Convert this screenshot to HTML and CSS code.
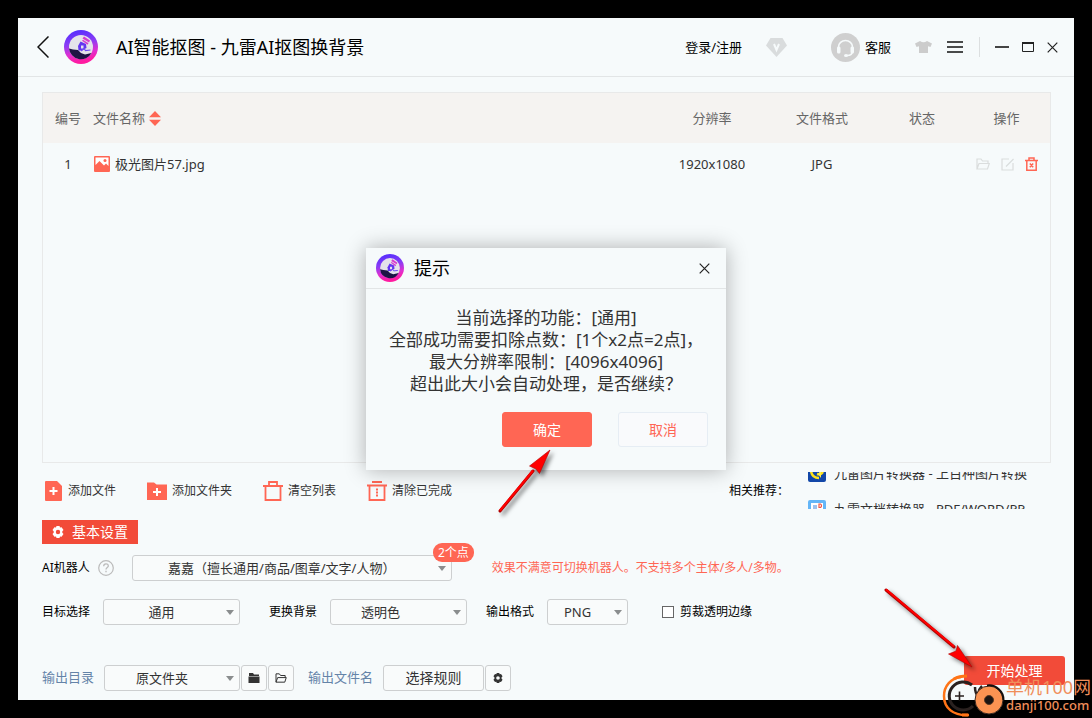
FILE: index.html
```html
<!DOCTYPE html>
<html lang="zh-CN">
<head>
<meta charset="utf-8">
<title>AI智能抠图 - 九雷AI抠图换背景</title>
<link rel="stylesheet" href="styles.css">
</head>
<body>
<svg class="defs" width="0" height="0" aria-hidden="true">
  <defs>
    <linearGradient id="ring" x1="0" y1="0" x2="0.2" y2="1">
      <stop offset="0" stop-color="#4b2bff"/>
      <stop offset="0.45" stop-color="#8a3cf5"/>
      <stop offset="0.75" stop-color="#e02fd0"/>
      <stop offset="1" stop-color="#ff1ba0"/>
    </linearGradient>
    <symbol id="logo" viewBox="0 0 34 34">
      <circle cx="17" cy="17" r="17" fill="url(#ring)"/>
      <circle cx="17" cy="17" r="12" fill="#e4e3ea"/>
      <path d="M5 18.500 9 19.500 14 20 17 23 21 24.500 27.500 23A12 12 0 0 1 5 18.500Z" fill="#1d1445"/>
      <path d="M18.500 8.500 20 6.500 26 10.500 25 12.500ZM18 10.700 19 9.700 24.500 13.300 23.500 14.800Z" fill="#d63bd0"/>
      <path d="M16.500 11.500 22 14 22.500 18 18 20.500 14.500 20.500 14 16Z" fill="#6436f0"/>
      <path d="M17 15.500h2.500v3h-2.500z" fill="#e4e3ea"/>
      <path d="M17 21 20 18.500 21.500 20.500 26.500 20" fill="none" stroke="#6f4bf5" stroke-width="1.200"/>
    </symbol>
    <symbol id="gear" viewBox="0 0 12 12">
      <path fill-rule="evenodd" d="M4.500 0h3l.5 1.600 1.600-.4L11.500 4l-1.200 1.200v1.600L11.500 8l-1.900 2.800L8 10.400 7.500 12h-3L4 10.400l-1.600.4L.5 8l1.200-1.200V5.200L.5 4l1.900-2.800L4 1.600ZM6 3.800a2.200 2.200 0 1 0 0 4.400 2.200 2.200 0 0 0 0-4.400Z"/>
    </symbol>
    <symbol id="close" viewBox="0 0 11 11">
      <path d="M.7.7 10.300 10.300M10.300.7.7 10.300" fill="none" stroke="currentColor" stroke-width="1.200"/>
    </symbol>
    <symbol id="folder-open" viewBox="0 0 14 12">
      <path d="M1 11V1h4l1.500 2H12v2.500M1 11 3 5.500h10.300L11.500 11Z" fill="none" stroke="currentColor" stroke-width="1.200"/>
    </symbol>
  </defs>
</svg>

<div class="app">
  <header class="titlebar">
    <button class="icon-btn back" aria-label="返回"><svg width="12" height="22" viewBox="0 0 12 22"><path d="M11.500.5 1 11 11.500 21.500" fill="none" stroke="#111" stroke-width="1.500"/></svg></button>
    <svg class="brand-logo" width="34" height="34"><use href="#logo"/></svg>
    <h1 class="title">AI智能抠图 - 九雷AI抠图换背景</h1>
    <div class="account">
      <a class="login" href="#login">登录/注册</a>
      <svg width="21" height="19" viewBox="0 0 21 19"><path d="M4.500 0h12L21 7.500 10.500 19 0 7.500Z" fill="#d9dcdd"/><path d="m8 6 2.500 6L13 6" fill="none" stroke="#f6fafb" stroke-width="2"/></svg>
    </div>
    <a class="service" href="#service">
      <svg width="29" height="29" viewBox="0 0 29 29"><circle cx="14.500" cy="14.500" r="14.500" fill="#cfcfcf"/><path d="M7.500 15.500V14a7 6.500 0 0 1 14 0v1.500M21.500 18c0 3-2 4.500-5.500 4.500" fill="none" stroke="#f6fafb" stroke-width="1.600"/><rect x="6" y="13.500" width="3.500" height="7" rx="1.500" fill="#f6fafb"/><rect x="19.500" y="13.500" width="3.500" height="7" rx="1.500" fill="#f6fafb"/><ellipse cx="15" cy="22.500" rx="2" ry="1.500" fill="#f6fafb"/></svg>
      <span>客服</span>
    </a>
    <div class="tools">
      <button class="icon-btn" aria-label="换肤"><svg width="17" height="12" viewBox="0 0 17 12"><path d="M5 0q3.500 2.500 7 0l5 2.500L15.500 6 13 5.200V12H4V5.200L1.500 6 0 2.500Z" fill="#ccc"/></svg></button>
      <button class="icon-btn" aria-label="菜单"><svg width="16" height="12" viewBox="0 0 16 12"><path d="M0 1h16M0 6h16M0 11h16" stroke="#111" stroke-width="1.600"/></svg></button>
    </div>
    <div class="window-controls">
      <button class="icon-btn" aria-label="最小化"><svg width="14" height="10" viewBox="0 0 14 10"><path d="M0 5h14" stroke="#444" stroke-width="2"/></svg></button>
      <button class="icon-btn" aria-label="最大化"><svg width="12" height="10" viewBox="0 0 12 10"><path d="M.5 1h11v8.500H.5Z" fill="none" stroke="#222"/><path d="M0 1h12" stroke="#222" stroke-width="2"/></svg></button>
      <button class="icon-btn" aria-label="关闭"><svg width="11" height="11"><use href="#close"/></svg></button>
    </div>
  </header>

  <main class="content">
    <section class="file-panel">
      <table class="files">
        <colgroup><col class="c-no"><col><col class="c-res"><col class="c-fmt"><col class="c-state"><col class="c-ops"></colgroup>
        <thead>
          <tr>
            <th>编号</th>
            <th class="name"><span class="name-cell sort">文件名称 <svg width="12" height="15" viewBox="0 0 12 15"><path d="M6 0 12 6.200H0ZM0 8.800h12L6 15Z" fill="#ff6654"/></svg></span></th>
            <th>分辨率</th><th>文件格式</th><th>状态</th><th class="ops">操作</th>
          </tr>
        </thead>
        <tbody>
          <tr>
            <td>1</td>
            <td class="name"><span class="name-cell"><svg width="16" height="16" viewBox="0 0 16 16"><rect width="16" height="16" rx="1" fill="#ff6654"/><path d="M1.500 1.500h13v8.500L12 7.500 10 9.500 5.500 5 1.500 9Z" fill="#fff"/><circle cx="11" cy="4.500" r="1.500" fill="#ff6654"/></svg>极光图片57.jpg</span></td>
            <td>1920x1080</td><td>JPG</td><td></td>
            <td class="ops">
              <div class="row-ops">
                <button class="icon-btn faint" aria-label="打开文件夹"><svg width="14" height="12"><use href="#folder-open"/></svg></button>
                <button class="icon-btn faint" aria-label="编辑"><svg width="13" height="13" viewBox="0 0 13 13"><path d="M8 1H1v11h11V5M5 8.500 12.500 1" fill="none" stroke="currentColor" stroke-width="1.200"/></svg></button>
                <button class="icon-btn accent" aria-label="删除"><svg width="13" height="14" viewBox="0 0 13 14"><path d="M0 3.500h13M4 3V1h5v2M1.800 4v9.200h9.400V4M4.800 6.500l3.400 3.800M8.200 6.500l-3.400 3.800" fill="none" stroke="currentColor" stroke-width="1.500"/></svg></button>
              </div>
            </td>
          </tr>
        </tbody>
      </table>
    </section>

    <section class="toolbar">
      <button class="tool-btn"><svg width="20" height="20" viewBox="0 0 20 20"><path d="M2 1q0-1 1-1h11l5 5v14q0 1-1 1H3q-1 0-1-1Z" fill="#ff6654"/><path d="M6.500 10h8M10.500 6v8" stroke="#fff" stroke-width="2"/></svg>添加文件</button>
      <button class="tool-btn"><svg width="20" height="20" viewBox="0 0 20 20"><path d="M0 1.500h7l2.500 2H20V19H0Z" fill="#ff6654"/><path d="M6 11h8M10 7v8" stroke="#fff" stroke-width="2"/></svg>添加文件夹</button>
      <button class="tool-btn"><svg width="20" height="20" viewBox="0 0 20 20"><path d="M0 5h20M6 5V1h8v4M2.500 5v14h15V5" fill="none" stroke="#ff6654" stroke-width="1.800"/></svg>清空列表</button>
      <button class="tool-btn"><svg width="20" height="20" viewBox="0 0 20 20"><path d="M5 1h10M0 4.500h20M2.500 4.500V19h15V4.500" fill="none" stroke="#ff6654" stroke-width="1.800"/><path d="M10 7.500v8" stroke="#ff6654" stroke-width="2" stroke-dasharray="2 1"/></svg>清除已完成</button>
      <div class="related">
        <span>相关推荐：</span>
        <div class="ticker">
          <a class="ticker-item" href="#image"><svg width="18" height="18" viewBox="0 0 18 18"><rect width="18" height="18" rx="2" fill="#1247a8"/><path d="M3 7q1 7 8 7M15 8q-2 3-6 2" fill="none" stroke="#ffe21a" stroke-width="2.500"/><path d="m10 10 3-4v8Z" fill="#fff04a"/></svg>九雷图片转换器 - 上百种图片转换</a>
          <a class="ticker-item" href="#doc"><svg width="18" height="18" viewBox="0 0 18 18"><rect width="18" height="18" rx="2" fill="#63b5f7"/><rect x="3" y="3" width="7" height="12" fill="#fff"/><path d="M5 6h4M5 8h4" stroke="#3d83dc"/><rect x="9" y="3" width="6" height="6" fill="#fff"/><path d="M11 4h1.500q2 1.500 0 3.500H11Z" fill="none" stroke="#ef5542" stroke-width="1.200"/></svg>九雷文档转换器 - PDF/WORD/PP</a>
        </div>
      </div>
    </section>

    <h2 class="tab"><svg width="12" height="12" fill="#fff"><use href="#gear"/></svg>基本设置</h2>

    <form class="settings">
      <div class="row robot-row">
        <label for="robot">AI机器人</label>
        <button type="button" class="icon-btn help" aria-label="帮助"><svg width="16" height="16" viewBox="0 0 16 16"><circle cx="8" cy="8" r="7.300" fill="none" stroke="#bbb" stroke-width="1.200"/><path d="M5.700 6.200c0-3.200 4.600-3 4.600-.3C10.300 7.500 8 7.500 8 9.500M8 10.800v1.500" fill="none" stroke="#bbb" stroke-width="1.300"/></svg></button>
        <div class="select w-robot"><select id="robot"><option>嘉嘉（擅长通用/商品/图章/文字/人物）</option></select><span class="badge">2个点</span></div>
        <p class="hint">效果不满意可切换机器人。不支持多个主体/多人/多物。</p>
      </div>
      <div class="row option-row">
        <div class="field"><label for="target">目标选择</label><div class="select w-mid"><select id="target"><option>通用</option></select></div></div>
        <div class="field bg-field"><label for="bg">更换背景</label><div class="select w-mid wide-arrow"><select id="bg"><option>透明色</option></select></div></div>
        <div class="field fmt-field"><label for="fmt">输出格式</label><div class="select w-small"><select id="fmt"><option>PNG</option></select></div></div>
        <label class="check"><input type="checkbox">剪裁透明边缘</label>
      </div>
      <div class="row output-row">
        <label class="blue" for="dir">输出目录</label>
        <div class="select dir"><select id="dir"><option>原文件夹</option></select></div>
        <button type="button" class="square" aria-label="选择目录"><svg width="12" height="10" viewBox="0 0 12 10"><path d="M1 0h4l1 1.500h5V3H1ZM.5 3.500h11V10H.5Z" fill="#333"/></svg></button>
        <button type="button" class="square" aria-label="打开目录"><svg width="12" height="10"><use href="#folder-open"/></svg></button>
        <span class="blue out-name">输出文件名</span>
        <button type="button" class="rule">选择规则</button>
        <button type="button" class="square" aria-label="规则设置"><svg width="10" height="10" fill="#333"><use href="#gear"/></svg></button>
        <button type="button" class="start">开始处理</button>
      </div>
    </form>
  </main>
</div>

<div class="modal-layer">
  <div class="dialog" role="dialog" aria-labelledby="dialog-title">
    <div class="dialog-head">
      <svg width="28" height="28"><use href="#logo"/></svg>
      <h2 id="dialog-title">提示</h2>
      <button class="icon-btn" aria-label="关闭"><svg width="11" height="11"><use href="#close"/></svg></button>
    </div>
    <p class="dialog-text">当前选择的功能：[通用]<br>全部成功需要扣除点数：[1个x2点=2点]，<br>最大分辨率限制：[4096x4096]<br>超出此大小会自动处理，是否继续？</p>
    <div class="dialog-actions">
      <button class="ok">确定</button>
      <button class="cancel">取消</button>
    </div>
  </div>
</div>

<svg class="arrow arrow-ok" width="60" height="70" viewBox="0 0 60 70" aria-hidden="true"><path d="M5 64 38 24" stroke="#b00000" stroke-width="3" stroke-linecap="round"/><path d="M5 63.500 38 23.500" stroke="red" stroke-width="2"/><path d="M55 3 44.500 26.500 41 22 34.500 19Z" fill="red" stroke="#b00000" stroke-width=".6"/></svg>
<svg class="arrow arrow-start" width="100" height="90" viewBox="0 0 100 90" aria-hidden="true"><path d="M6 10 74 67" stroke="#b00000" stroke-width="3" stroke-linecap="round"/><path d="M6 9.500 74 66.500" stroke="red" stroke-width="2"/><path d="M92 87 77.500 65.500 76 71 68.500 74Z" fill="red" stroke="#b00000" stroke-width=".6"/></svg>

<div class="watermark">
  <svg width="64" height="46" viewBox="0 0 64 46" aria-hidden="true">
    <path d="M19 5C9 6 2 14 2 24c0 12 9 20 25 19" fill="none" stroke="#ff7417" stroke-width="2.500"/>
    <path d="M12 7q5-3 13-3M20 43h6" fill="none" stroke="#ff7417" stroke-width="3"/>
    <path d="M30 13A14 14 0 1 0 31 34" fill="none" stroke="#2a211f" stroke-width="3"/>
    <path d="M13 24h9M17.500 19.500v9" stroke="#2a211f" stroke-width="1.600"/>
    <path d="M33 15q0 6 3 9M40 14q-3 3-4 8" fill="none" stroke="#2a211f" stroke-width="2.500"/>
    <circle cx="47" cy="28" r="14" fill="#fb9352" stroke="#3a2a22"/>
    <path d="M45 13.500A14.500 14.500 0 0 1 61.500 28" fill="none" stroke="#16100e" stroke-width="2"/>
    <circle cx="47" cy="28" r="4.500" fill="#1b1513" stroke="#5a3822"/>
  </svg>
  <div class="watermark-text"><span class="wm-name">单机100网</span><span class="wm-url">danji100.com</span></div>
</div>
</body>
</html>
```

FILE: styles.css
```css
* { box-sizing: border-box; }

body {
  margin: 0;
  min-height: 100vh;
  padding: 18px;
  background: #000;
  color: #333;
  font: 13px/20px "Noto Sans", "Noto Sans CJK SC", sans-serif;
  display: flex;
  position: relative;
  overflow: hidden;
}

h1, h2, p { margin: 0; font-weight: 400; }
a { color: inherit; text-decoration: none; }
svg { display: block; flex: none; }
button, select, input { font: inherit; color: inherit; margin: 0; }
button { padding: 0; cursor: pointer; white-space: nowrap; }
label { white-space: nowrap; }
.defs { position: absolute; }
.icon-btn { border: 0; background: none; display: flex; color: #222; }

.app {
  flex: 1;
  min-width: 0;
  background: #f6fafb;
  display: flex;
  flex-direction: column;
}

/* Title bar */
.titlebar {
  display: flex;
  align-items: center;
  height: 59px;
  padding: 0 16px 0 19px;
  border-bottom: 1px solid #e2e5e6;
  color: #000;
}
.brand-logo { margin-left: 15px; }
.title { margin-left: 18px; font-size: 18px; line-height: 26px; white-space: nowrap; }
.account { display: flex; align-items: center; gap: 24px; margin-left: auto; }
.service { display: flex; align-items: center; gap: 5px; margin-left: 44px; }
.tools { display: flex; align-items: center; gap: 15px; margin-left: 24px; }
.window-controls {
  display: flex;
  align-items: center;
  gap: 13px;
  height: 20px;
  margin-left: 16px;
  padding-left: 15px;
  border-left: 1px solid #dcdfe0;
}

.content {
  flex: 1;
  display: flex;
  flex-direction: column;
  padding: 15px 0 9px 24px;
}

/* File list */
.file-panel { flex: 1; margin-right: 23px; border: 1px solid #e8e9e9; }
.files { width: 100%; border-collapse: collapse; table-layout: fixed; text-align: center; }
.files th { height: 50px; padding: 0; background: #f5f3f1; color: #666; font-weight: 400; }
.files td { height: 42px; padding: 0; }
.files .name { text-align: left; }
.files .ops { padding-right: 4px; }
.c-no { width: 50px; }
.c-res, .c-fmt { width: 110px; }
.c-state { width: 90px; }
.c-ops { width: 83px; }
.name-cell { display: flex; align-items: center; gap: 5px; padding-left: 1px; }
.sort { padding-left: 0; gap: 4px; }
.row-ops { display: flex; align-items: center; justify-content: center; gap: 11px; }
.faint { color: #dadddd; }
.accent { color: #ff6654; }

/* Toolbar */
.toolbar {
  display: flex;
  align-items: center;
  gap: 31px;
  height: 37px;
  margin-top: 9px;
  padding: 0 42px 0 1px;
  font-size: 12px;
}
.tool-btn { display: flex; align-items: center; gap: 5px; border: 0; background: none; }
.related { display: flex; align-items: center; gap: 19px; height: 37px; margin-left: auto; color: #000; }
.ticker {
  width: 224px;
  height: 37px;
  overflow: hidden;
  display: flex;
  flex-direction: column;
  justify-content: center;
  font-size: 13px;
  color: #333;
}
.ticker-item { display: flex; align-items: center; gap: 8px; height: 36px; flex: none; white-space: nowrap; }

/* Settings */
.tab {
  display: flex;
  align-items: center;
  align-self: flex-start;
  gap: 8px;
  height: 24px;
  margin-top: 11px;
  padding: 0 10px;
  background: #f24b39;
  color: #fff;
  font-size: 14px;
}
.settings { margin-top: 11px; font-size: 12px; line-height: 22px; color: #000; }
.row { display: flex; align-items: center; }
.option-row { margin-top: 18px; }
.output-row { margin-top: 31px; padding-right: 9px; height: 35px; align-items: flex-end; }
.help { margin: 0 18px 0 8px; }
.select { position: relative; color: #333; font-size: 13px; }
.select::after {
  content: "";
  position: absolute;
  right: 6px;
  top: 11px;
  border: 4px solid transparent;
  border-top: 5px solid #8a8d8e;
  border-bottom: 0;
  pointer-events: none;
}
.select select {
  appearance: none;
  display: block;
  width: 100%;
  height: 26px;
  padding: 0 20px 0 0;
  border: 1px solid #cdcfd0;
  border-radius: 3px;
  background: #f9fbfb;
  text-align: center;
  text-align-last: center;
}
.w-robot { width: 320px; }
.w-mid { width: 137px; }
.w-small { width: 81px; }
.wide-arrow select { padding-right: 36px; }
.badge {
  position: absolute;
  right: -22px;
  top: -12px;
  z-index: 1;
  padding: 0 5px;
  border-radius: 9px;
  background: #ff6654;
  color: #fff;
  font-size: 12px;
  line-height: 19px;
}
.hint { margin-left: 40px; color: #ff6654; white-space: nowrap; }
.field { display: flex; align-items: center; gap: 13px; }
.bg-field { margin-left: 29px; }
.fmt-field { margin-left: 19px; }
.check { display: flex; align-items: center; gap: 6px; margin-left: 34px; }
.check input { appearance: none; width: 12px; height: 12px; border: 1px solid #666; background: #fff; }
.blue { color: #6483a8; font-size: 13px; line-height: 28px; }
.dir { width: 136px; margin-left: 10px; }
.square, .rule {
  height: 26px;
  border: 1px solid #cdcfd0;
  border-radius: 3px;
  background: #f9fbfb;
  color: #333;
}
.square { width: 26px; margin-left: 1px; display: flex; align-items: center; justify-content: center; }
.out-name { margin: 0 10px 0 14px; }
.rule { width: 101px; font-size: 14px; }
.start {
  align-self: flex-start;
  width: 101px;
  height: 29px;
  margin-left: auto;
  border: 0;
  border-radius: 3px;
  background: #f24b39;
  color: #fff;
  font-size: 14px;
}

/* Dialog */
.modal-layer {
  position: absolute;
  inset: 0;
  display: flex;
  align-items: center;
  justify-content: center;
}
.dialog { width: 360px; background: #f6fafb; box-shadow: 0 0 20px rgba(0, 0, 0, 0.3); }
.dialog-head {
  display: flex;
  align-items: center;
  gap: 10px;
  height: 41px;
  padding: 0 16px 0 10px;
  border-bottom: 1px solid #e2e5e6;
  color: #000;
}
.dialog-head h2 { flex: 1; font-size: 18px; line-height: 26px; }
.dialog-text { padding-top: 18px; font-size: 17px; line-height: 22px; text-align: center; }
.dialog-actions { display: flex; justify-content: flex-end; gap: 26px; padding: 17px 18px 23px; }
.ok, .cancel { width: 90px; height: 35px; border: 1px solid #ff6654; border-radius: 3px; font-size: 14px; }
.ok { background: #ff6654; color: #fff; }
.cancel { background: #f9fafc; border-color: #e6edf4; color: #ff6654; }

/* Annotations over the window */
.arrow { position: absolute; filter: drop-shadow(3px 3px 2px rgba(0, 0, 0, 0.5)); pointer-events: none; }
.arrow-ok { left: 495px; top: 447px; }
.arrow-start { left: 880px; top: 580px; }
.watermark { position: absolute; right: 1px; bottom: 0; display: flex; align-items: center; color: #f08e5a; pointer-events: none; }
.watermark-text { display: flex; flex-direction: column; padding-top: 2px; }
.wm-name { font-size: 18px; line-height: 18px; white-space: nowrap; }
.wm-url { font-size: 13px; line-height: 18px; font-weight: 500; }
```
